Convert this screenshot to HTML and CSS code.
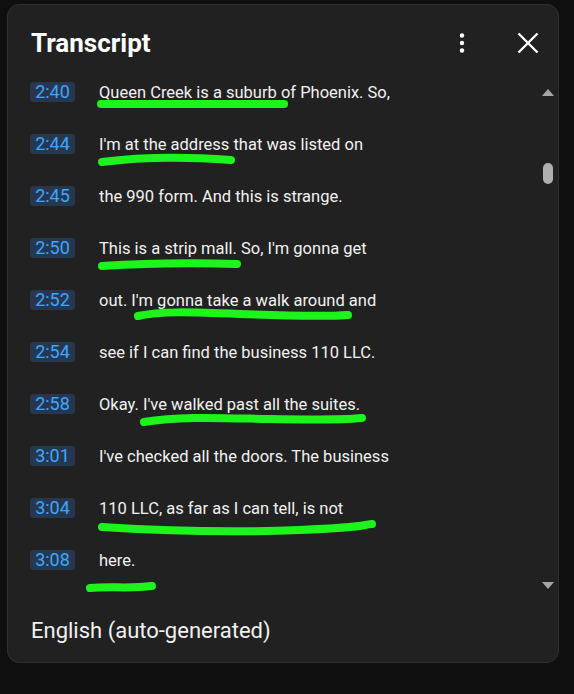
FILE: index.html
```html
<!DOCTYPE html>
<html lang="en">
<head>
    <meta charset="UTF-8">
    <meta name="viewport" content="width=device-width, initial-scale=1.0">
    <title>Transcript</title>
    <link rel="stylesheet" href="styles.css">
</head>
<body>
    <div class="panel">
        <div class="panel-header">
            <h2>Transcript</h2>
            <div class="header-actions">
                <button class="icon-btn" aria-label="More actions">
                    <svg width="24" height="24" viewBox="0 0 24 24"><circle cx="12" cy="4.5" r="2.2" fill="#fff"/><circle cx="12" cy="12" r="2.2" fill="#fff"/><circle cx="12" cy="19.5" r="2.2" fill="#fff"/></svg>
                </button>
                <button class="icon-btn" aria-label="Close transcript">
                    <svg width="24" height="24" viewBox="0 0 24 24"><path d="M2.5 2.5 L21.5 21.5 M21.5 2.5 L2.5 21.5" stroke="#fff" stroke-width="2.3" fill="none"/></svg>
                </button>
            </div>
        </div>

        <div class="transcript-body">
            <div class="segments">
                <div class="segment"><span class="stamp">2:40</span><span class="line">Queen Creek is a suburb of Phoenix. So,</span></div>
                <div class="segment"><span class="stamp">2:44</span><span class="line">I'm at the address that was listed on</span></div>
                <div class="segment"><span class="stamp">2:45</span><span class="line">the 990 form. And this is strange.</span></div>
                <div class="segment"><span class="stamp">2:50</span><span class="line">This is a strip mall. So, I'm gonna get</span></div>
                <div class="segment"><span class="stamp">2:52</span><span class="line">out. I'm gonna take a walk around and</span></div>
                <div class="segment"><span class="stamp">2:54</span><span class="line">see if I can find the business 110 LLC.</span></div>
                <div class="segment"><span class="stamp">2:58</span><span class="line">Okay. I've walked past all the suites.</span></div>
                <div class="segment"><span class="stamp">3:01</span><span class="line">I've checked all the doors. The business</span></div>
                <div class="segment"><span class="stamp">3:04</span><span class="line">110 LLC, as far as I can tell, is not</span></div>
                <div class="segment"><span class="stamp">3:08</span><span class="line">here.</span></div>
            </div>
            <div class="scrollbar">
                <span class="arrow-up"></span>
                <span class="thumb"></span>
                <span class="arrow-down"></span>
            </div>
        </div>

        <div class="panel-footer">English (auto-generated)</div>
    </div>

    <!-- hand-drawn highlight marks -->
    <svg class="marks" width="574" height="694" viewBox="0 0 574 694">
        <g stroke="#1cf51c" stroke-width="8" stroke-linecap="round" fill="none">
            <path d="M101 104 L284 104"/>
            <path d="M102 162 C140 157 190 157 231 160"/>
            <path d="M102 266 C150 263 200 263 237 264"/>
            <path d="M138 316 C160 311 190 312 240 314 S320 317 348 315"/>
            <path d="M144 422 C180 416 220 418 270 419 S340 420 362 418"/>
            <path d="M102 527 C150 530 230 533 300 530 S360 525 372 524"/>
            <path d="M90 588 C110 586 130 589 152 586"/>
        </g>
    </svg>
</body>
</html>
```

FILE: styles.css
```css
* {
    margin: 0;
    padding: 0;
    box-sizing: border-box;
    font-family: Roboto, "Liberation Sans", sans-serif;
}

body {
    background-color: #0f0f0f;
    width: 574px;
    height: 694px;
    padding: 4px 0 0 7px;
    position: relative;
}

.panel {
    width: 552px;
    height: 659px;
    background-color: #212121;
    border: 1px solid #303030;
    border-radius: 12px;
    display: flex;
    flex-direction: column;
    overflow: hidden;
}

.panel-header {
    height: 61px;
    flex-shrink: 0;
    display: flex;
    align-items: flex-start;
    justify-content: space-between;
    padding: 23px 18px 0 23px;
}

h2 {
    color: #fff;
    font-size: 26px;
    line-height: 30px;
    font-weight: 700;
}

.header-actions {
    display: flex;
    gap: 42px;
    padding-top: 3px;
}

.icon-btn {
    width: 24px;
    height: 24px;
    background: none;
    border: none;
    display: flex;
    align-items: center;
    justify-content: center;
}

.transcript-body {
    height: 538px;
    flex-shrink: 0;
    display: flex;
}

.segments {
    flex: 1;
}

.segment {
    height: 52px;
    display: flex;
    align-items: center;
    padding-left: 22px;
}

.stamp {
    width: 45px;
    height: 20px;
    line-height: 20px;
    text-align: center;
    background-color: #263850;
    color: #3ea6ff;
    font-size: 18px;
    border-radius: 4px;
    margin-right: 24px;
    flex-shrink: 0;
}

.line {
    color: #f1f1f1;
    font-size: 16.5px;
}

.scrollbar {
    width: 16px;
    margin-right: 2px;
    display: flex;
    flex-direction: column;
    align-items: center;
    padding: 23px 0 15px;
}

.arrow-up {
    width: 0;
    height: 0;
    border-left: 6px solid transparent;
    border-right: 6px solid transparent;
    border-bottom: 7px solid #a6a6a6;
}

.thumb {
    width: 10px;
    height: 21px;
    border-radius: 5px;
    background-color: #b0b0b0;
    margin-top: 67px;
}

.arrow-down {
    width: 0;
    height: 0;
    border-left: 6px solid transparent;
    border-right: 6px solid transparent;
    border-top: 7px solid #a6a6a6;
    margin-top: auto;
}

.panel-footer {
    flex: 1;
    display: flex;
    align-items: center;
    padding: 0 0 6px 23px;
    color: #f1f1f1;
    font-size: 22px;
}

.marks {
    position: absolute;
    top: 0;
    left: 0;
    pointer-events: none;
}
```
